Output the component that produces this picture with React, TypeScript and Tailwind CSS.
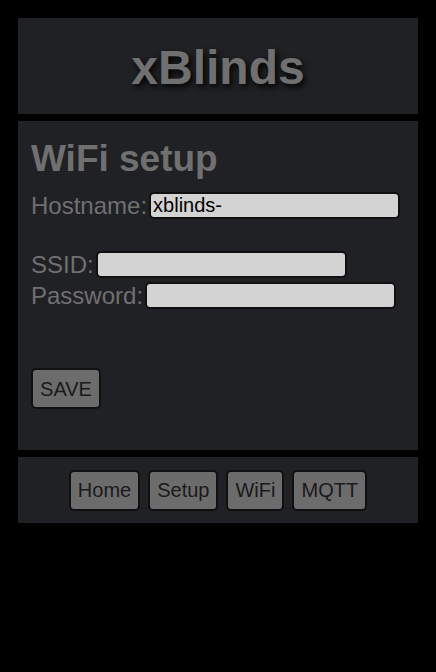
import React from "react";

const font = { fontFamily: '"Liberation Sans", Arial, sans-serif' };

function Field({ label, value }: { label: string; value?: string }) {
  return (
    <div className="flex h-[31px] items-center">
      <span className="text-[24px] leading-[24px] text-[#707070]">{label}</span>
      <input
        readOnly
        value={value ?? ""}
        className="ml-[2px] h-[27px] w-[251px] rounded-[5px] border-2 border-[#101010] bg-[#d3d3d3] px-[2px] text-[20px] leading-[24px] text-black outline-none"
      />
    </div>
  );
}

function NavButton({ children }: { children: React.ReactNode }) {
  return (
    <button className="h-[41px] rounded-[5px] border-2 border-[#101010] bg-[#6c6c6c] px-[7px] text-[20px] text-[#1a1a1a]">
      {children}
    </button>
  );
}

export default function App() {
  return (
    <div className="min-h-[672px] w-full bg-black pt-[18px]" style={font}>
      <div className="ml-[18px] flex w-[400px] flex-col gap-[7px]">
        <div className="flex h-[96px] items-center justify-center bg-[#202124]">
          <h1 className="pt-[3px] text-[48px] font-bold leading-[48px] text-[#707070] [text-shadow:2px_3px_6px_#000]">
            xBlinds
          </h1>
        </div>
        <div className="flex h-[329px] flex-col bg-[#202124] pl-[13px]">
          <h2 className="mt-[18px] text-[37px] font-bold leading-[40px] text-[#707070]">WiFi setup</h2>
          <div className="mt-[11px]">
            <Field label="Hostname:" value="xblinds-" />
          </div>
          <div className="mt-[28px]">
            <Field label="SSID:" />
            <Field label="Password:" />
          </div>
          <div className="mt-[57px]">
            <button className="h-[41px] w-[70px] rounded-[5px] border-2 border-[#101010] bg-[#6c6c6c] text-[20px] text-[#1a1a1a]">
              SAVE
            </button>
          </div>
        </div>
        <div className="flex h-[66px] items-center justify-center gap-[8px] bg-[#202124]">
          <NavButton>Home</NavButton>
          <NavButton>Setup</NavButton>
          <NavButton>WiFi</NavButton>
          <NavButton>MQTT</NavButton>
        </div>
      </div>
    </div>
  );
}
